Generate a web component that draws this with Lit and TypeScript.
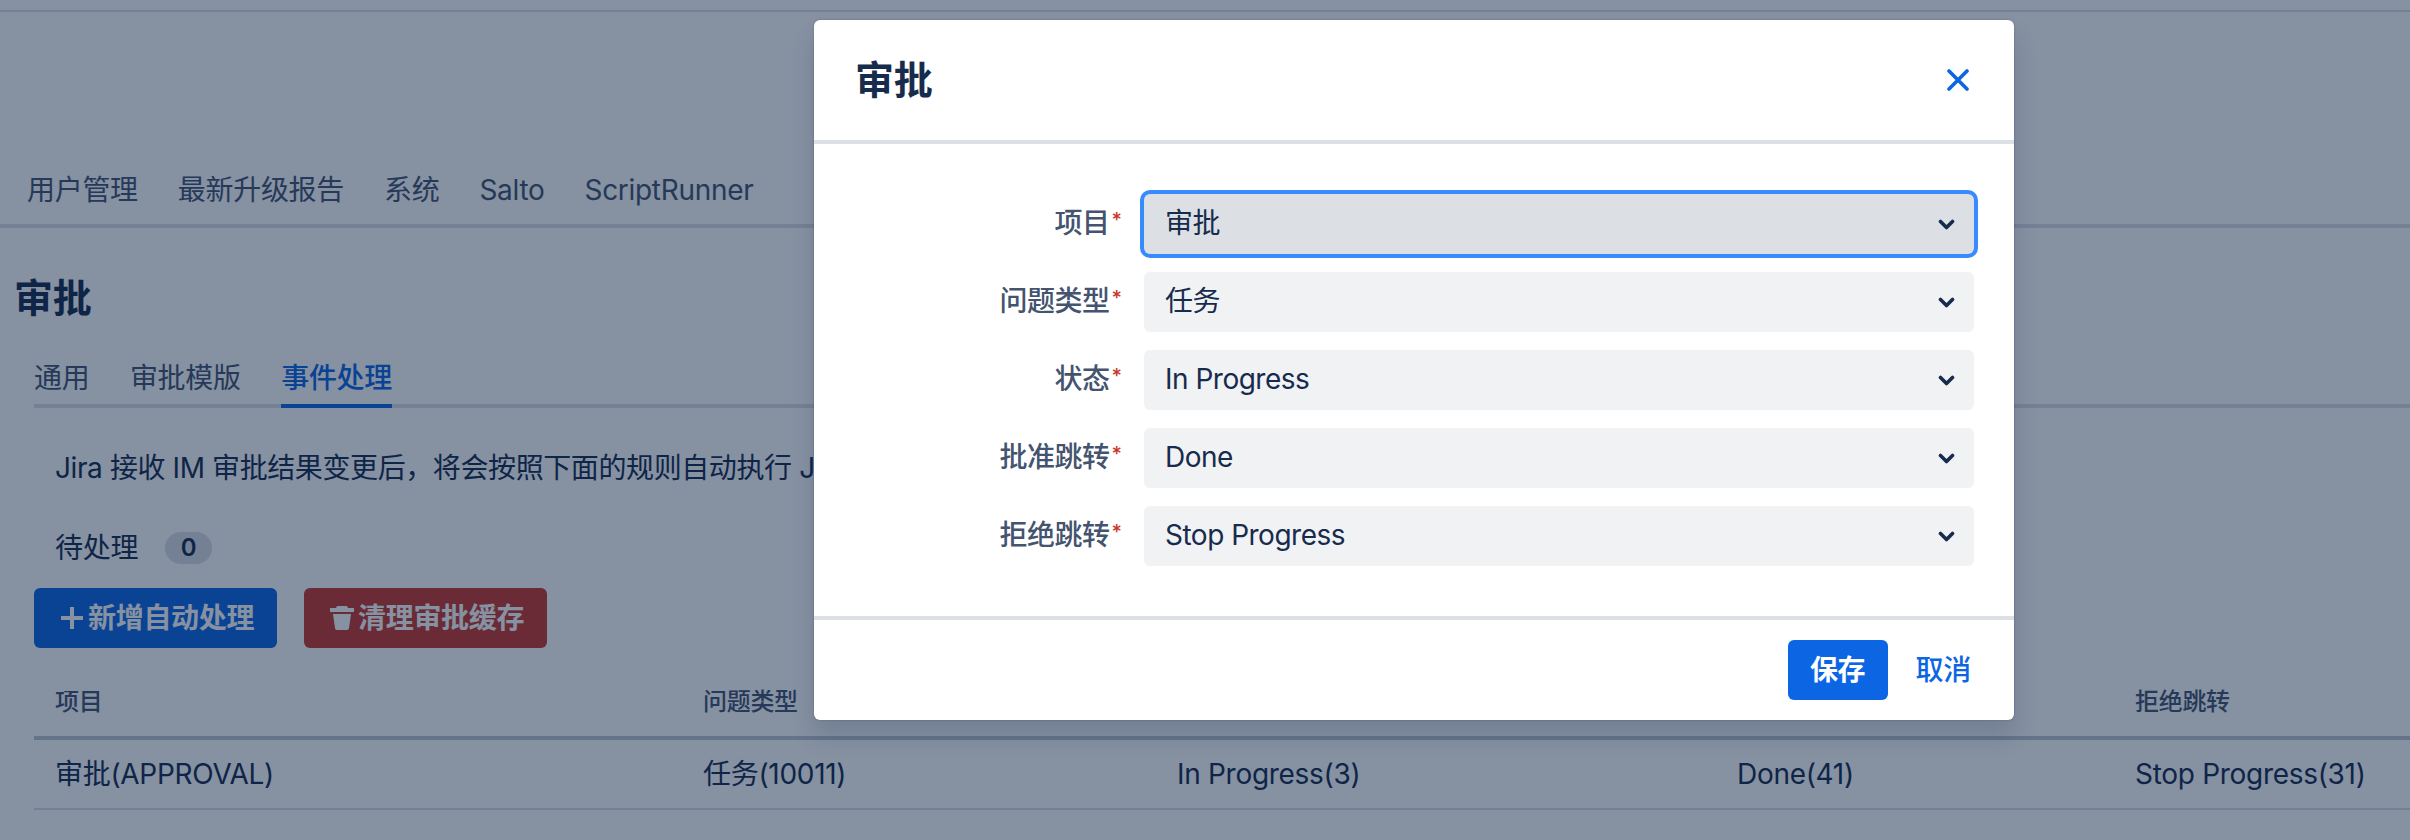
import {LitElement, html, css} from "lit";
import {customElement} from "lit/decorators.js";

const navItems = ["用户管理", "最新升级报告", "系统", "Salto", "ScriptRunner"];
const columns = ["项目", "问题类型", "状态", "批准跳转", "拒绝跳转"];
const row = ["审批(APPROVAL)", "任务(10011)", "In Progress(3)", "Done(41)", "Stop Progress(31)"];
const fields = [
    {label: "项目", value: "审批", focused: true},
    {label: "问题类型", value: "任务", focused: false},
    {label: "状态", value: "In Progress", focused: false},
    {label: "批准跳转", value: "Done", focused: false},
    {label: "拒绝跳转", value: "Stop Progress", focused: false},
];

@customElement("app-root")
class AppRoot extends LitElement {
    static styles = css`
        :host {
            display: block;
            position: relative;
            width: 2410px;
            height: 840px;
            overflow: hidden;
            background: #fff;
            color: #172b4d;
            font-family: Inter, "Noto Sans CJK SC", sans-serif;
            font-size: 28px;
            line-height: 44px;
            letter-spacing: -0.3px;
        }

        .topbar {
            height: 10px;
            border-bottom: 2px solid #dcdfe4;
        }

        .nav {
            display: flex;
            gap: 40px;
            padding: 156px 0 12px 27px;
            border-bottom: 4px solid #dcdfe4;
            color: #44546f;
        }

        .title {
            margin: 0;
            padding: 45px 0 0 14px;
            font-size: 39px;
            line-height: 50px;
            font-weight: 700;
        }

        .tabs {
            display: flex;
            gap: 40.5px;
            margin: 33px 0 0 34px;
            padding-bottom: 4px;
            border-bottom: 4px solid #dcdfe4;
            color: #44546f;
        }

        .tab {
            margin-bottom: -8px;
            padding-bottom: 4px;
            border-bottom: 4px solid transparent;
        }

        .tab.active {
            color: #0c66e4;
            font-weight: 500;
            border-bottom-color: #0c66e4;
        }

        .desc {
            margin: 38px 0 0 55px;
            white-space: nowrap;
            letter-spacing: -0.4px;
        }

        .pending {
            display: flex;
            align-items: center;
            gap: 27px;
            margin: 36px 0 0 55px;
        }

        .badge {
            width: 47px;
            height: 32px;
            border-radius: 16px;
            background: #dcdfe4;
            font-size: 24px;
            line-height: 32px;
            font-weight: 600;
            text-align: center;
        }

        .actions {
            display: flex;
            gap: 27px;
            margin: 18px 0 0 34px;
        }

        .action {
            display: flex;
            align-items: center;
            gap: 4px;
            width: 243px;
            height: 60px;
            padding-left: 26px;
            box-sizing: border-box;
            border-radius: 6px;
            color: #fff;
            font-weight: 600;
        }

        .action svg {
            width: 24px;
            height: 24px;
            fill: #fff;
        }

        .action.primary {
            background: #0c66e4;
        }

        .action.danger {
            background: #c9372c;
        }

        .table {
            display: grid;
            grid-template-columns: 648px 474px 560px 398px 1fr;
            margin: 34px 0 0 34px;
        }

        .th,
        .td {
            padding-left: 21px;
            white-space: nowrap;
        }

        .th {
            padding-bottom: 14px;
            border-bottom: 4px solid #c1c7d0;
            color: #44546f;
            font-size: 24px;
            line-height: 40px;
            font-weight: 500;
        }

        .td {
            height: 68px;
            line-height: 68px;
            border-bottom: 2px solid #dcdfe4;
        }

        .blanket {
            position: absolute;
            inset: 0;
            background: rgba(9, 30, 66, 0.49);
        }

        .modal {
            position: absolute;
            left: 814px;
            top: 20px;
            display: flex;
            flex-direction: column;
            width: 1200px;
            height: 700px;
            border-radius: 6px;
            background: #fff;
            box-shadow: 0 16px 24px rgba(9, 30, 66, 0.15), 0 0 2px rgba(9, 30, 66, 0.31);
        }

        .modal-header {
            display: flex;
            align-items: center;
            justify-content: space-between;
            height: 120px;
            padding: 0 45px 0 41px;
            border-bottom: 4px solid #dcdfe4;
        }

        .modal-title {
            margin: 0;
            font-size: 39px;
            line-height: 50px;
            font-weight: 700;
        }

        .close {
            width: 22px;
            height: 22px;
            fill: none;
            stroke: #0c66e4;
            stroke-width: 3.6;
            stroke-linecap: round;
        }

        .modal-body {
            display: grid;
            grid-template-columns: 308px 1fr;
            column-gap: 22px;
            row-gap: 18px;
            flex: 1;
            align-content: start;
            padding: 50px 40px 0 0;
        }

        .label {
            display: flex;
            align-items: center;
            justify-content: flex-end;
            padding-bottom: 2px;
            color: #44546f;
            font-weight: 500;
            letter-spacing: -0.5px;
        }

        .star {
            align-self: flex-start;
            margin: 6px 0 0 2px;
            color: #c9372c;
            font-size: 20px;
            line-height: 40px;
            letter-spacing: 0;
        }

        .select {
            display: flex;
            align-items: center;
            justify-content: space-between;
            height: 60px;
            padding: 0 19px 0 21px;
            border-radius: 6px;
            background: #f1f2f4;
            letter-spacing: -0.5px;
        }

        .select span {
            padding-bottom: 2px;
        }

        .select.focused {
            background: #dcdfe4;
            box-shadow: 0 0 0 4px #388bff;
        }

        .chevron {
            width: 17px;
            height: 11px;
            fill: none;
            stroke: #172b4d;
            stroke-width: 3.6;
            stroke-linecap: round;
            stroke-linejoin: round;
        }

        .modal-footer {
            display: flex;
            align-items: center;
            justify-content: flex-end;
            gap: 28px;
            height: 100px;
            padding-right: 43px;
            border-top: 4px solid #dcdfe4;
        }

        .save {
            width: 100px;
            height: 60px;
            border-radius: 6px;
            background: #0c66e4;
            color: #fff;
            font-weight: 600;
            line-height: 60px;
            text-align: center;
        }

        .cancel {
            color: #0c66e4;
            font-weight: 500;
        }
    `;

    override render() {
        return html`
            <div class="topbar"></div>
            <div class="nav">${navItems.map((item) => html`<span>${item}</span>`)}</div>
            <h1 class="title">审批</h1>
            <div class="tabs">
                <span class="tab">通用</span>
                <span class="tab">审批模版</span>
                <span class="tab active">事件处理</span>
            </div>
            <div class="desc">Jira 接收 IM 审批结果变更后，将会按照下面的规则自动执行 Jira 操作。</div>
            <div class="pending"><span>待处理</span><span class="badge">0</span></div>
            <div class="actions">
                <div class="action primary">
                    <svg viewBox="0 0 24 24"><path d="M10 1h4v9h9v4h-9v9h-4v-9H1v-4h9z" /></svg>
                    <span>新增自动处理</span>
                </div>
                <div class="action danger">
                    <svg viewBox="0 0 24 24">
                        <path d="M7 0h10l1 2h6v4H0V2h6z" />
                        <path d="M3 8h18l-2 14.2a2 2 0 0 1-2 1.8H7a2 2 0 0 1-2-1.8z" />
                    </svg>
                    <span>清理审批缓存</span>
                </div>
            </div>
            <div class="table">
                ${columns.map((col) => html`<div class="th">${col}</div>`)}
                ${row.map((cell) => html`<div class="td">${cell}</div>`)}
            </div>
            <div class="blanket"></div>
            <div class="modal">
                <div class="modal-header">
                    <h2 class="modal-title">审批</h2>
                    <svg class="close" viewBox="0 0 22 22"><path d="M2 2l18 18M20 2L2 20" /></svg>
                </div>
                <div class="modal-body">
                    ${fields.map(
                        (field) => html`
                            <div class="label"><span>${field.label}</span><span class="star">*</span></div>
                            <div class="select ${field.focused ? "focused" : ""}">
                                <span>${field.value}</span>
                                <svg class="chevron" viewBox="0 0 17 11"><path d="M2.5 2.5l6 6 6-6" /></svg>
                            </div>
                        `
                    )}
                </div>
                <div class="modal-footer">
                    <div class="save">保存</div>
                    <div class="cancel">取消</div>
                </div>
            </div>
        `;
    }
}

declare global {
    interface HTMLElementTagNameMap {
        "app-root": AppRoot;
    }
}
